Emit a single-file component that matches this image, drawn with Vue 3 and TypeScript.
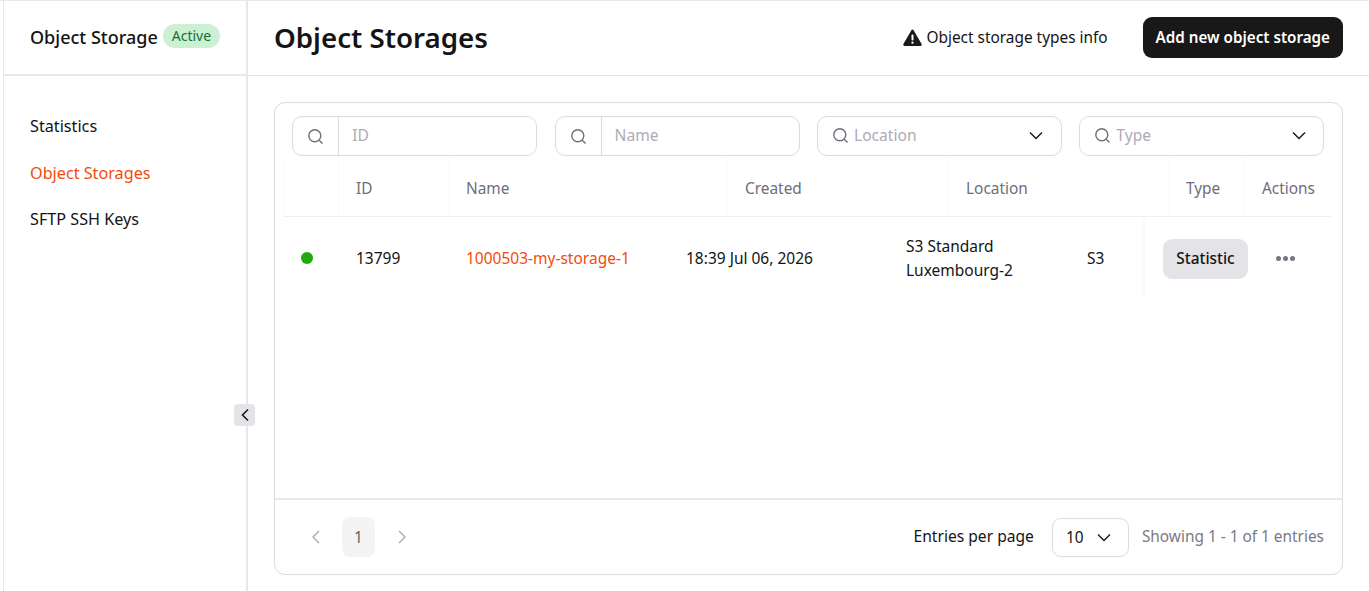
<script setup lang="ts">
const navItems = [
  { label: 'Statistics', active: false },
  { label: 'Object Storages', active: true },
  { label: 'SFTP SSH Keys', active: false },
];
const columns = ['', 'ID', 'Name', 'Created', 'Location', 'Type', 'Actions'];
const searchFilters = ['ID', 'Name'];
const selectFilters = ['Location', 'Type'];
</script>

<template>
  <div class="page">
    <aside class="sidebar">
      <div class="brand">
        <span class="brand-name">Object Storage</span>
        <span class="badge">Active</span>
      </div>
      <nav class="nav">
        <a v-for="item in navItems" :key="item.label" class="nav-item" :class="{ active: item.active }">{{ item.label }}</a>
      </nav>
      <button class="collapse">
        <svg width="10" height="14" viewBox="0 0 10 14" fill="none"><path d="M8 1.5 2.5 7 8 12.5" stroke="#1a1a1a" stroke-width="1.6" /></svg>
      </button>
    </aside>

    <main class="main">
      <header class="topbar">
        <h1>Object Storages</h1>
        <div class="top-actions">
          <span class="info">
            <svg width="19" height="17" viewBox="0 0 19 17"><path d="M9.5.5a1.3 1.3 0 0 1 1.1.7l8 13.800a1.300 1.300 0 0 1-1.100 1.900h-16a1.300 1.300 0 0 1-1.100-1.900l8-13.800a1.300 1.300 0 0 1 1.100-.7Z" fill="#1a1a1a" /><rect x="8.500" y="5.500" width="2" height="6" rx="1" fill="#fff" /><circle cx="9.500" cy="13.700" r="1.150" fill="#fff" /></svg>
            Object storage types info
          </span>
          <button class="primary">Add new object storage</button>
        </div>
      </header>

      <div class="content">
        <section class="card">
          <div class="filters">
            <div v-for="f in searchFilters" :key="f" class="field search">
              <span class="search-addon">
                <svg class="lens" width="17" height="17" viewBox="0 0 17 17" fill="none"><circle cx="7.800" cy="7.800" r="6" stroke="#6f6d78" stroke-width="1.400" /><path d="m12.200 12.200 3.300 3.300" stroke="#6f6d78" stroke-width="1.400" /></svg>
              </span>
              <span class="placeholder">{{ f }}</span>
            </div>
            <div v-for="f in selectFilters" :key="f" class="field select">
              <svg class="lens" width="17" height="17" viewBox="0 0 17 17" fill="none"><circle cx="7.800" cy="7.800" r="6" stroke="#6f6d78" stroke-width="1.400" /><path d="m12.200 12.200 3.300 3.300" stroke="#6f6d78" stroke-width="1.400" /></svg>
              <span class="placeholder">{{ f }}</span>
              <svg class="chev" width="14" height="9" viewBox="0 0 14 9" fill="none"><path d="m1 1.500 6 6 6-6" stroke="#1a1a1a" stroke-width="1.500" /></svg>
            </div>
          </div>

          <div class="table">
            <div class="thead">
              <div v-for="(col, i) in columns" :key="i" class="th">{{ col }}</div>
            </div>
            <div class="row">
              <div class="td"><span class="dot"></span></div>
              <div class="td">13799</div>
              <div class="td link">1000503-my-storage-1</div>
              <div class="td">18:39 Jul 06, 2026</div>
              <div class="td location">S3 Standard<br />Luxembourg-2</div>
              <div class="td">S3</div>
              <div class="td sticky">
                <button class="stat">Statistic</button>
                <span class="dots"><i></i><i></i><i></i></span>
              </div>
            </div>
          </div>

          <footer class="footer">
            <div class="pager">
              <svg width="10" height="14" viewBox="0 0 10 14" fill="none"><path d="M8 1 2 7l6 6" stroke="#a9a7b0" stroke-width="1.300" /></svg>
              <span class="page-num">1</span>
              <svg width="10" height="14" viewBox="0 0 10 14" fill="none"><path d="m2 1 6 6-6 6" stroke="#a9a7b0" stroke-width="1.300" /></svg>
            </div>
            <div class="entries">
              <span class="per-label">Entries per page</span>
              <div class="per-page">
                <span>10</span>
                <svg width="14" height="9" viewBox="0 0 14 9" fill="none"><path d="m1 1.500 6 6 6-6" stroke="#1a1a1a" stroke-width="1.400" /></svg>
              </div>
              <span class="showing">Showing 1 - 1 of 1 entries</span>
            </div>
          </footer>
        </section>
      </div>
    </main>
  </div>
</template>

<style>
html,
body {
  margin: 0;
  background: #fff;
}
</style>

<style scoped>
.page {
  display: flex;
  height: 590px;
  padding-left: 3px;
  border-top: 1px solid #e8e8ea;
  font-family: 'Noto Sans', sans-serif;
  font-size: 15.4px;
  color: #141414;
  overflow: hidden;
}

.sidebar {
  position: relative;
  box-sizing: border-box;
  width: 245px;
  flex-shrink: 0;
  border-left: 1px solid #e8e8ea;
  border-right: 2px solid #e8e8ea;
}

.brand {
  box-sizing: border-box;
  display: flex;
  align-items: center;
  height: 75px;
  padding: 0 0 2px 26px;
  border-bottom: 2px solid #e8e8ea;
}

.brand-name {
  font-size: 18px;
  font-weight: 500;
}

.badge {
  margin-left: 5px;
  margin-top: -1px;
  padding: 0 9px;
  height: 24px;
  line-height: 23px;
  border-radius: 12px;
  background: #cdf0d3;
  color: #0f7236;
  font-size: 14px;
}

.nav {
  display: flex;
  flex-direction: column;
  gap: 26.500px;
  padding: 40px 0 0 26px;
}

.nav-item {
  font-size: 16.200px;
  line-height: 20px;
}

.nav-item.active {
  color: #f24c0d;
}

.collapse {
  position: absolute;
  top: 403px;
  right: -9px;
  display: flex;
  align-items: center;
  justify-content: center;
  width: 21px;
  height: 22px;
  padding: 0;
  border: none;
  border-radius: 4px;
  background: #e4e3e8;
}

.main {
  flex: 1;
  min-width: 0;
}

.topbar {
  box-sizing: border-box;
  display: flex;
  align-items: center;
  justify-content: space-between;
  height: 75px;
  padding: 0 26px;
  border-bottom: 1px solid #e4e4e6;
}

h1 {
  margin: 0 0 2px;
  font-size: 27.700px;
  font-weight: 600;
  line-height: 38px;
}

.top-actions {
  display: flex;
  align-items: center;
  gap: 35px;
  margin-bottom: 2px;
}

.info {
  display: flex;
  align-items: center;
  gap: 4px;
}

.primary {
  height: 41px;
  padding: 0 13px;
  border: none;
  border-radius: 9px;
  background: #181818;
  color: #fff;
  font: 600 15.200px 'Noto Sans', sans-serif;
}

.content {
  padding: 26px 26px 0;
}

.card {
  box-sizing: border-box;
  display: flex;
  flex-direction: column;
  height: 473px;
  border: 1px solid #dcdbe0;
  border-radius: 11px;
}

.filters {
  display: grid;
  grid-template-columns: repeat(4, 245px);
  column-gap: 17.400px;
  padding: 13px 0 0 17.200px;
}

.field {
  box-sizing: border-box;
  display: flex;
  align-items: center;
  height: 40px;
  border: 1px solid #dcdbe0;
  border-radius: 10px;
}

.search-addon {
  display: flex;
  align-items: center;
  justify-content: center;
  width: 45px;
  height: 100%;
  border-right: 1px solid #dcdbe0;
  flex-shrink: 0;
}

.search .placeholder {
  margin-left: 13px;
}

.select {
  padding: 0 17.500px 0 14px;
}

.select .placeholder {
  margin-left: 5px;
  flex: 1;
}

.select .chev {
  margin-bottom: 2px;
}

.select .lens {
  margin-bottom: 1px;
}

.placeholder {
  margin-bottom: 2px;
  font-size: 15.600px;
  color: #adabb5;
}

.table {
  flex: 1;
  margin: 0 11px 0 8px;
}

.thead {
  box-sizing: border-box;
  display: grid;
  grid-template-columns: 55px 110px 279px 221px 220px 76px 87px;
  height: 61px;
  border-bottom: 1px solid #f0f0f2;
}

.th {
  display: flex;
  align-items: center;
  padding-left: 17px;
  padding-top: 5px;
  color: #6f6d78;
  border-left: 1px solid #fafafb;
}

.row {
  display: grid;
  grid-template-columns: 55px 110px 220px 220px 181px 76px 186px;
  height: 82px;
  font-size: 15.500px;
}

.td {
  display: flex;
  align-items: center;
  padding-left: 18px;
}

.location {
  display: block;
  align-self: center;
  line-height: 24px;
}

.link {
  color: #f24c0d;
}

.dot {
  width: 12px;
  height: 12px;
  border-radius: 50%;
  background: #22a90f;
}

.sticky {
  box-shadow: -3px 0 3px -1px #f7f7f8;
}

.stat {
  width: 85px;
  height: 40px;
  margin-top: 2px;
  padding: 0 0 2px;
  border: none;
  border-radius: 9px;
  background: #e4e3e8;
  color: #141414;
  font: 500 15.400px 'Noto Sans', sans-serif;
}

.dots {
  display: flex;
  gap: 2px;
  margin-left: 28px;
}

.dots i {
  width: 5px;
  height: 5px;
  border-radius: 50%;
  background: #77757f;
}

.footer {
  box-sizing: border-box;
  display: flex;
  align-items: center;
  justify-content: space-between;
  height: 76px;
  padding: 0 18px 0 36px;
  border-top: 2px solid #e8e8ea;
}

.pager {
  display: flex;
  align-items: center;
  gap: 21px;
}

.page-num {
  display: flex;
  align-items: center;
  justify-content: center;
  width: 33px;
  height: 40px;
  margin-right: 1px;
  border-radius: 8px;
  background: #f4f4f5;
  color: #6b5f52;
}

.entries {
  display: flex;
  align-items: center;
}

.entries > span {
  margin-bottom: 2px;
}

.per-label {
  font-size: 15.600px;
}

.per-page {
  box-sizing: border-box;
  display: flex;
  align-items: center;
  justify-content: space-between;
  width: 77px;
  height: 39px;
  margin: 0 13px 0 18px;
  padding: 0 17px 0 13px;
  border: 1px solid #dcdbe0;
  border-radius: 9px;
}

.showing {
  color: #7b7984;
}

.lens {
  flex-shrink: 0;
}
</style>
